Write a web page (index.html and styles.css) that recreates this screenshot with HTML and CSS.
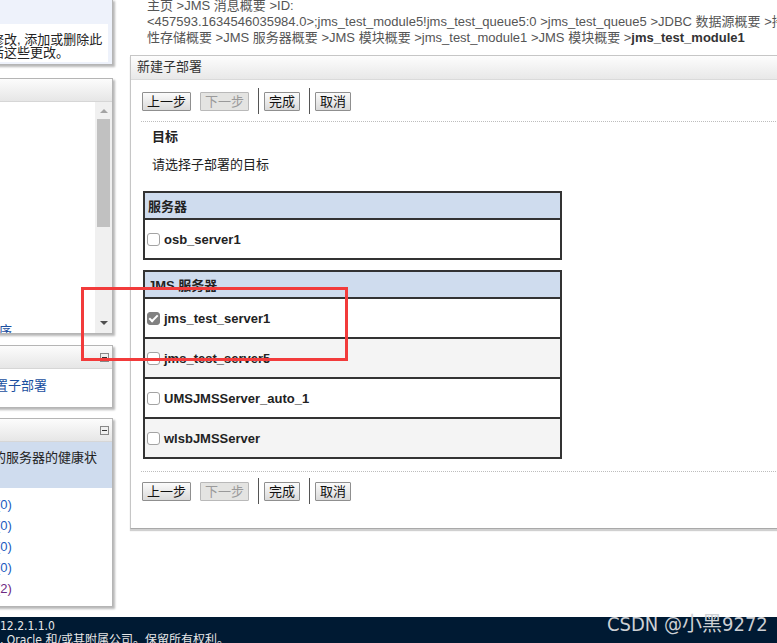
FILE: index.html
```html
<!DOCTYPE html>
<html lang="zh">

<head>
  <meta charset="UTF-8">
  <title>新建子部署 - WebLogic Server 管理控制台</title>
  <link rel="stylesheet" href="styles.css">
</head>

<body>
  <div class="page">
    <!-- 左侧栏 -->
    <div class="side">
      <div class="box change-box">
        <div class="change-note">
          修改, 添加或删除此<br>
          活这些更改。
        </div>
      </div>

      <div class="box nav-box">
        <div class="box-head"></div>
        <div class="nav-body">
          <div class="tree">序</div>
          <div class="scrollbar">
            <span class="arrow up"></span>
            <span class="thumb"></span>
            <span class="arrow down"></span>
          </div>
        </div>
      </div>

      <div class="box deploy-box">
        <div class="box-head">
          <svg class="fold" width="9" height="9" viewBox="0 0 9 9">
            <rect x="0.5" y="0.5" width="8" height="8" fill="#efefef" stroke="#888" />
            <line x1="2" y1="4.5" x2="7" y2="4.5" stroke="#333" />
          </svg>
        </div>
        <div class="deploy-body">置子部署</div>
      </div>

      <div class="box health-box">
        <div class="box-head">
          <svg class="fold" width="9" height="9" viewBox="0 0 9 9">
            <rect x="0.5" y="0.5" width="8" height="8" fill="#efefef" stroke="#888" />
            <line x1="2" y1="4.5" x2="7" y2="4.5" stroke="#333" />
          </svg>
        </div>
        <div class="health-note">的服务器的健康状</div>
        <ul class="health-list">
          <li>(0)</li>
          <li>(0)</li>
          <li>(0)</li>
          <li>(0)</li>
          <li class="visited">(2)</li>
        </ul>
      </div>
    </div>

    <!-- 主内容 -->
    <div class="content">
      <div class="crumbs">
        主页 &gt;JMS 消息概要 &gt;ID:<br>
        &lt;457593.1634546035984.0&gt;;jms_test_module5!jms_test_queue5:0 &gt;jms_test_queue5 &gt;JDBC 数据源概要 &gt;持久<br>
        性存储概要 &gt;JMS 服务器概要 &gt;JMS 模块概要 &gt;jms_test_module1 &gt;JMS 模块概要 &gt;<b>jms_test_module1</b>
      </div>

      <div class="panel">
        <div class="panel-head">新建子部署</div>
        <div class="panel-body">
          <div class="toolbar">
            <button class="btn">上一步</button>
            <button class="btn" disabled>下一步</button>
            <span class="sep"></span>
            <button class="btn">完成</button>
            <span class="sep"></span>
            <button class="btn">取消</button>
          </div>
          <div class="rule"></div>

          <div class="section-title">目标</div>
          <div class="hint">请选择子部署的目标</div>

          <table class="target-table">
            <tr><th>服务器</th></tr>
            <tr><td><label><input type="checkbox">osb_server1</label></td></tr>
          </table>

          <table class="target-table second">
            <tr><th>JMS 服务器</th></tr>
            <tr><td><label><input type="checkbox" checked>jms_test_server1</label></td></tr>
            <tr class="alt"><td><label><input type="checkbox">jms_test_server5</label></td></tr>
            <tr><td><label><input type="checkbox">UMSJMSServer_auto_1</label></td></tr>
            <tr class="alt"><td><label><input type="checkbox">wlsbJMSServer</label></td></tr>
          </table>

          <div class="rule bottom"></div>
          <div class="toolbar lower">
            <button class="btn">上一步</button>
            <button class="btn" disabled>下一步</button>
            <span class="sep"></span>
            <button class="btn">完成</button>
            <span class="sep"></span>
            <button class="btn">取消</button>
          </div>
        </div>
      </div>
    </div>
  </div>

  <div class="footer">
    <div>12.2.1.1.0</div>
    <div>, Oracle 和/或其附属公司。保留所有权利。</div>
  </div>

  <!-- 标注框 -->
  <div class="mark"></div>
  <div class="watermark">CSDN @小黑9272</div>
</body>

</html>
```

FILE: styles.css
```css
body {
  margin: 0;
  width: 777px;
  height: 643px;
  overflow: hidden;
  position: relative;
  background: #fff;
  font-family: "Liberation Sans", "Noto Sans CJK SC", sans-serif;
  font-size: 13px;
  color: #222;
}

.page {
  display: flex;
  height: 617px;
  overflow: hidden;
}

/* 左侧栏 */
.side {
  flex: none;
  width: 116px;
}

.box {
  width: 123px;
  margin-left: -10px;
  box-sizing: border-box;
  border: 1px solid #b5b5b5;
  background: #fff;
  box-shadow: 2px 2px 2px rgba(0, 0, 0, 0.28);
}

.box-head {
  height: 23px;
  box-sizing: border-box;
  border-bottom: 1px solid #d6d6d6;
  background: linear-gradient(#fcfcfc, #e6e6e6);
  display: flex;
  align-items: center;
  justify-content: flex-end;
  padding-right: 3px;
}

.change-box {
  margin-top: -1px;
  height: 66px;
  background: #eef2fb;
  padding: 24px 4px 0 0;
}

.change-note {
  height: 38px;
  box-sizing: border-box;
  padding-top: 9px;
  background: #fff;
  line-height: 13px;
  white-space: nowrap;
}

.nav-box {
  margin-top: 13px;
}

.nav-body {
  display: flex;
  height: 231px;
}

.tree {
  flex: 1;
  padding: 221px 0 0 8px;
  line-height: 16px;
  overflow: hidden;
  color: #1b4fa0;
}

.scrollbar {
  width: 17px;
  background: #f0f0f0;
  display: flex;
  flex-direction: column;
  align-items: center;
}

.arrow {
  width: 0;
  height: 0;
  border-left: 4px solid transparent;
  border-right: 4px solid transparent;
}

.arrow.up {
  border-bottom: 4px solid #a3a3a3;
  margin-top: 7px;
}

.thumb {
  width: 13px;
  height: 108px;
  margin-top: 6px;
  background: #c1c1c1;
}

.arrow.down {
  border-top: 4px solid #505050;
  margin-top: auto;
  margin-bottom: 8px;
}

.deploy-box {
  margin-top: 11px;
}

.deploy-body {
  height: 38px;
  box-sizing: border-box;
  padding: 9px 0 0 4px;
  line-height: 16px;
  color: #1b4fa0;
  white-space: nowrap;
}

.health-box {
  margin-top: 10px;
}

.health-note {
  height: 46px;
  box-sizing: border-box;
  padding: 8px 0 0 2px;
  background: #cfdcee;
  line-height: 16px;
  white-space: nowrap;
}

.health-list {
  list-style: none;
  margin: 0;
  padding: 6px 0 7px 5px;
  line-height: 21px;
  color: #1c5bc0;
}

.health-list .visited {
  color: #6e2a82;
}

/* 主内容 */
.content {
  flex: none;
  width: 720px;
  margin-left: 14px;
}

.crumbs {
  margin-top: -2px;
  padding-left: 17px;
  line-height: 16px;
  color: #555;
  white-space: nowrap;
}

.crumbs b {
  color: #333;
}

.panel {
  margin-top: 9px;
  border-left: 1px solid #c6c6c6;
  border-top: 1px solid #c6c6c6;
  border-bottom: 1px solid #a9a9a9;
  box-shadow: 0 2px 1px #d0d0d0;
}

.panel-head {
  height: 24px;
  box-sizing: border-box;
  border-bottom: 1px solid #dadada;
  background: linear-gradient(#fdfdfd, #e8e8e8);
  padding-left: 6px;
  line-height: 21px;
  color: #333;
}

.panel-body {
  padding: 8px 0 24px 10px;
}

.toolbar {
  display: flex;
  align-items: center;
  height: 26px;
  padding-left: 1px;
}

.toolbar.lower {
  margin-top: 6px;
}

.btn {
  font-family: inherit;
  font-size: 13px;
  height: 19px;
  line-height: 17px;
  padding: 0 4px;
  margin: 0 9px 0 0;
  border: 1px solid #8f8f8f;
  border-radius: 1px;
  background: linear-gradient(#fbfbfb, #dadada);
  color: #111;
}

.btn:disabled {
  color: #9a9a9a;
  border-color: #b9b9b9;
  background: #e4e4e2;
}

.sep {
  width: 1px;
  height: 26px;
  margin-right: 5px;
  background: #555;
}

.rule {
  margin-top: 7px;
  border-top: 1px dotted #bdbdbd;
}

.rule.bottom {
  margin-top: 12px;
}

.section-title {
  margin: 7px 0 0 11px;
  font-weight: bold;
  line-height: 16px;
}

.hint {
  margin: 12px 0 0 11px;
  line-height: 16px;
}

.target-table {
  width: 419px;
  margin: 18px 0 0 2px;
  border: 1px solid #333;
  border-spacing: 0;
  border-collapse: separate;
  font-weight: bold;
}

.target-table.second {
  margin-top: 10px;
}

.target-table th,
.target-table td {
  border: 1px solid #333;
  text-align: left;
}

.target-table th {
  height: 25px;
  padding: 0 3px;
  background: #cfdcee;
}

.target-table td {
  height: 38px;
  padding: 0 2px;
  background: #fff;
}

.target-table .alt td {
  background: #f4f4f4;
}

.target-table label {
  display: flex;
  align-items: center;
}

/* 复选框 */
.target-table input {
  appearance: none;
  position: relative;
  width: 13px;
  height: 13px;
  margin: 0 4px 0 0;
  border: 1px solid #a3a3a3;
  border-radius: 3px;
  background: #fff;
}

.target-table input:checked {
  background: #818181;
  border-color: #818181;
}

.target-table input:checked::after {
  content: "";
  position: absolute;
  left: 3px;
  top: 0;
  width: 3px;
  height: 7px;
  border: solid #fff;
  border-width: 0 2px 2px 0;
  transform: rotate(45deg);
}

/* 页脚 */
.footer {
  height: 26px;
  box-sizing: border-box;
  padding-top: 2px;
  overflow: hidden;
  background: #001a33;
  color: #e8e8e8;
  font-family: "Liberation Sans Narrow", "DejaVu Sans Condensed", "Noto Sans CJK SC", sans-serif;
  font-size: 12px;
  line-height: 14px;
  white-space: nowrap;
}

.mark {
  position: absolute;
  left: 81px;
  top: 287px;
  width: 267px;
  height: 74px;
  box-sizing: border-box;
  border: 3px solid #f23b3b;
}

.watermark {
  position: absolute;
  left: 607px;
  top: 611px;
  font-family: "Liberation Sans Narrow", "DejaVu Sans Condensed", "Noto Sans CJK SC", sans-serif;
  font-size: 20px;
  line-height: 26px;
  color: #cdd0d4;
  white-space: nowrap;
}
```
